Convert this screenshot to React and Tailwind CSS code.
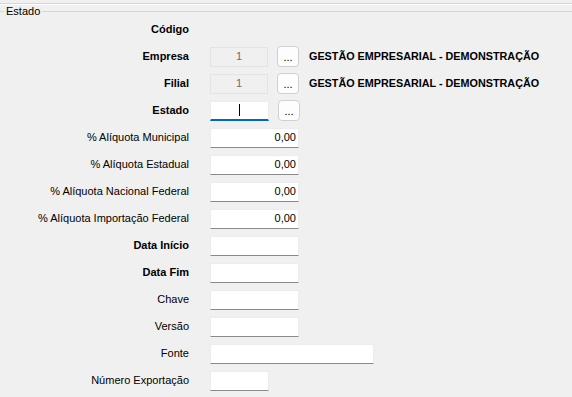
export default function App() {
  const font = { fontFamily: '"Liberation Sans", Arial, sans-serif' };
  const rows = [
    { label: "Código", bold: true, type: "none" },
    { label: "Empresa", bold: true, type: "ref" },
    { label: "Filial", bold: true, type: "ref" },
    { label: "Estado", bold: true, type: "focus" },
    { label: "% Alíquota Municipal", type: "num" },
    { label: "% Alíquota Estadual", type: "num" },
    { label: "% Alíquota Nacional Federal", type: "num" },
    { label: "% Alíquota Importação Federal", type: "num" },
    { label: "Data Início", bold: true, type: "text", w: "w-[89px]" },
    { label: "Data Fim", bold: true, type: "text", w: "w-[89px]" },
    { label: "Chave", type: "text", w: "w-[89px]" },
    { label: "Versão", type: "text", w: "w-[89px]" },
    { label: "Fonte", type: "text", w: "w-[164px]" },
    { label: "Número Exportação", type: "text", w: "w-[59px]" },
  ];

  const Btn = () => (
    <div className="ml-[9px] w-[22px] h-[21px] rounded-[4px] border border-[#d0d0d0] bg-[#fdfdfd] flex items-end justify-center pb-[3px] text-[11px] leading-none text-black">
      ...
    </div>
  );

  const renderField = (r) => {
    if (r.type === "none") return null;
    if (r.type === "ref")
      return (
        <>
          <div className="w-[58px] h-[20px] border border-[#e3e3e3] bg-[#f0f0f0] flex items-center justify-center text-[11px] text-[#6d6d6d]">
            1
          </div>
          <Btn />
          <div className="ml-[10px] text-[10.8px] font-bold text-black">
            GESTÃO EMPRESARIAL - DEMONSTRAÇÃO
          </div>
        </>
      );
    if (r.type === "focus")
      return (
        <>
          <div className="w-[59px] h-[20px] bg-white border border-[#ececec] border-b-2 border-b-[#0067c0] flex items-center justify-center">
            <div className="w-px h-[12px] bg-black"></div>
          </div>
          <Btn />
        </>
      );
    if (r.type === "num")
      return (
        <div className="w-[89px] h-[20px] bg-white border border-[#ececec] border-b-[#8a8a8a] flex items-center justify-end pr-[2px] text-[11px] text-black">
          0,00
        </div>
      );
    return (
      <div className={`${r.w} h-[20px] bg-white border border-[#ececec] border-b-[#8a8a8a]`}></div>
    );
  };

  return (
    <div className="w-[572px] h-[397px] bg-[#f0f0f0] overflow-hidden relative" style={font}>
      <div className="absolute left-0 right-0 top-[3px] h-[2px] border-t border-[#d6d6d6] border-b border-b-white"></div>
      <div className="pt-[11px]">
        <div className="border-t border-[#d6d6d6] relative">
          <div className="absolute left-[4px] -top-[7px] px-[2px] bg-[#f0f0f0] text-[11px] leading-[13px] text-black">
            Estado
          </div>
          <div className="pt-[4px] flex flex-col">
            {rows.map((r, i) => (
              <div key={i} className="h-[27px] flex items-center">
                <div
                  className={`w-[189px] text-right text-[11px] text-black ${r.bold ? "font-bold" : ""}`}
                >
                  {r.label}
                </div>
                <div className="ml-[21px] flex items-center">{renderField(r)}</div>
              </div>
            ))}
          </div>
        </div>
      </div>
    </div>
  );
}
